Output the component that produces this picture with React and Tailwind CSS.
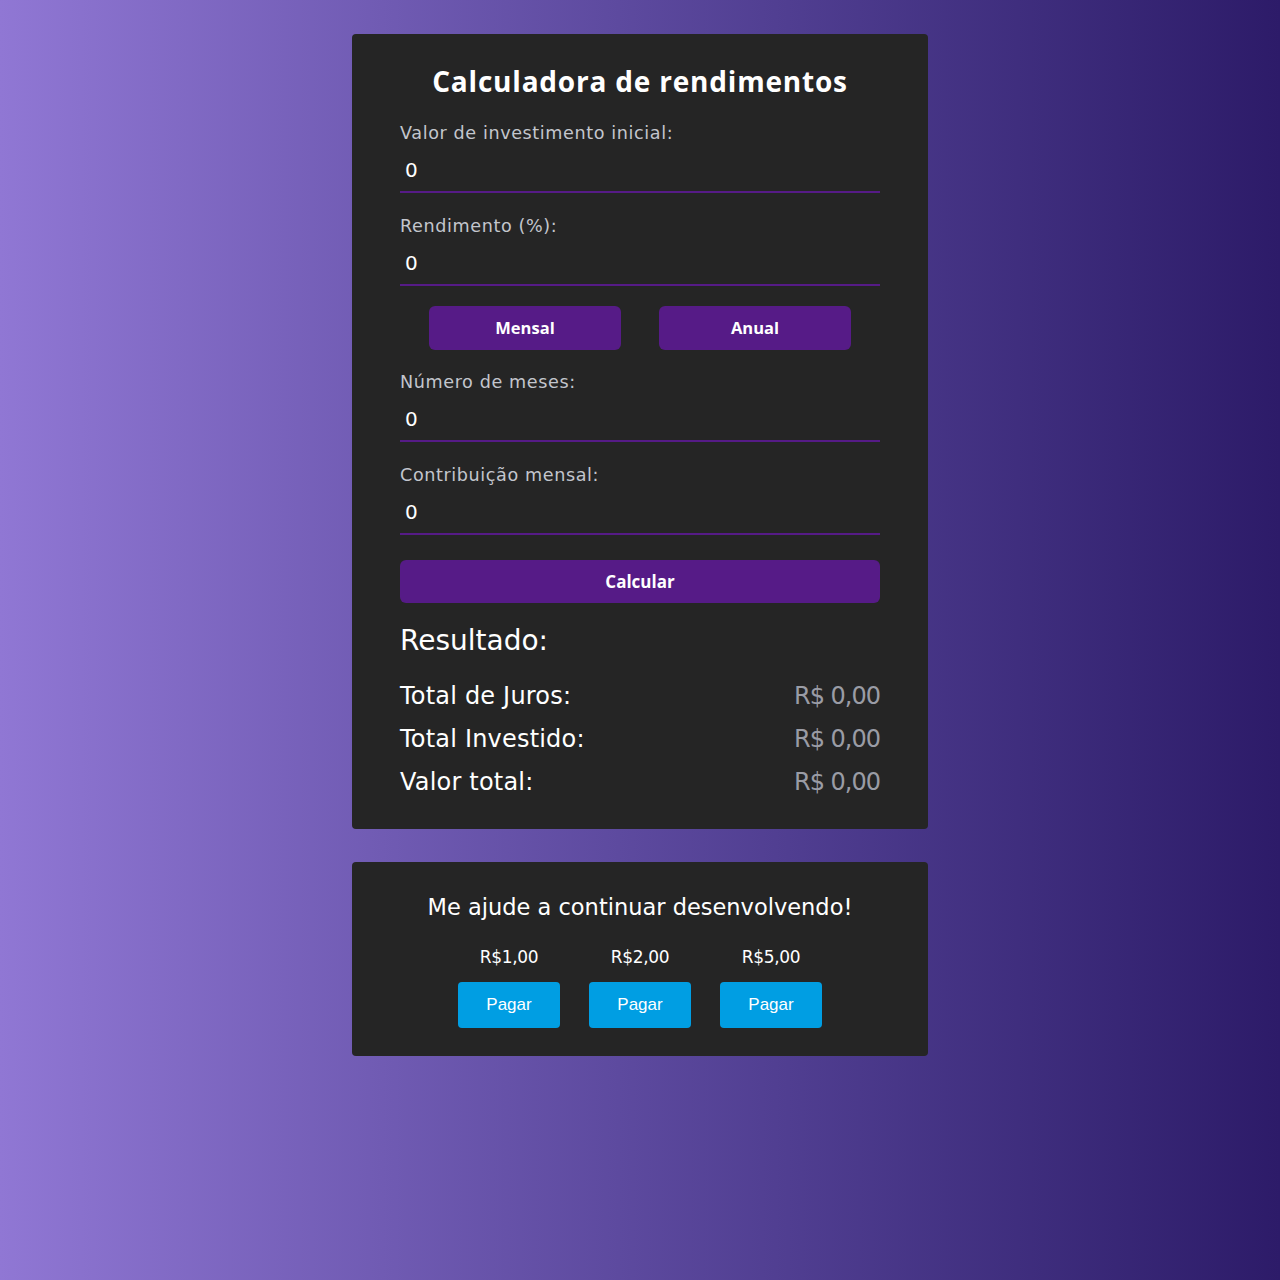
import React, { useState } from 'react';

const CORPO = { fontFamily: '"DejaVu Sans", "Open Sans", sans-serif' };
const NEGRITO = { fontFamily: '"Open Sans", "Liberation Sans", sans-serif' };

// Campo com rótulo e linha roxa embaixo
const Campo = ({ rotulo, valor, onChange, className = '' }) => (
  <div className={`flex flex-col ${className}`}>
    <label className="text-[17.6px] leading-[26px] tracking-[0.6px] text-[#c3c6cd]">{rotulo}</label>
    <input
      type="text"
      value={valor}
      onChange={onChange}
      style={CORPO}
      className="mt-[3px] h-[44px] bg-transparent border-b-2 border-[#561b87] px-[5px] text-[20px] text-white outline-none"
    />
  </div>
);

const Linha = ({ titulo, valor }) => (
  <div className="flex justify-between items-center h-[43px]">
    <span className="text-[24px] tracking-[0.2px] text-white">{titulo}</span>
    <span className="text-[24px] tracking-[-1px] text-[#9a9ca5]">{valor}</span>
  </div>
);

export default function App() {
  const [inicial, setInicial] = useState('0');
  const [taxa, setTaxa] = useState('0');
  const [meses, setMeses] = useState('0');
  const [contrib, setContrib] = useState('0');

  return (
    <div
      className="min-h-[1280px] w-full flex flex-col items-center pt-[34px] gap-[33px] bg-gradient-to-r from-[#9077d4] to-[#2d1b69]"
      style={CORPO}
    >
      {/* CALCULADORA */}
      <div className="w-[576px] bg-[#252525] rounded-[4px] px-[48px] pt-[28px] pb-[26px] flex flex-col">
        <h1 style={NEGRITO} className="text-center text-white font-bold text-[28px] leading-[38px] tracking-[0.8px]">
          Calculadora de rendimentos
        </h1>

        <Campo className="mt-[20px]" rotulo="Valor de investimento inicial:" valor={inicial} onChange={(e) => setInicial(e.target.value)} />
        <Campo className="mt-[20px]" rotulo="Rendimento (%):" valor={taxa} onChange={(e) => setTaxa(e.target.value)} />

        <div className="flex justify-center gap-[38px] mt-[20px] mb-[19px]">
          <button style={NEGRITO} className="w-[192px] h-[44px] rounded-[6px] bg-[#561b87] text-white font-bold text-[16.5px]">Mensal</button>
          <button style={NEGRITO} className="w-[192px] h-[44px] rounded-[6px] bg-[#561b87] text-white font-bold text-[16.5px]">Anual</button>
        </div>

        <Campo rotulo="Número de meses:" valor={meses} onChange={(e) => setMeses(e.target.value)} />
        <Campo className="mt-[20px]" rotulo="Contribuição mensal:" valor={contrib} onChange={(e) => setContrib(e.target.value)} />

        <button style={NEGRITO} className="mt-[25px] h-[43px] w-full rounded-[6px] bg-[#561b87] text-white font-bold text-[17px]">
          Calcular
        </button>

        <h2 className="mt-[19px] text-[28px] leading-[38px] text-white">Resultado:</h2>
        <div className="mt-[14px] flex flex-col">
          <Linha titulo="Total de Juros:" valor="R$ 0,00" />
          <Linha titulo="Total Investido:" valor="R$ 0,00" />
          <Linha titulo="Valor total:" valor="R$ 0,00" />
        </div>
      </div>

      {/* DOAÇÃO */}
      <div className="w-[576px] bg-[#252525] rounded-[4px] pt-[30px] pb-[28px] flex flex-col items-center">
        <p className="text-[22.5px] leading-[30px] text-white">Me ajude a continuar desenvolvendo!</p>
        <div className="mt-[22px] flex gap-[29px]">
          {['R$1,00', 'R$2,00', 'R$5,00'].map((v) => (
            <div key={v} className="flex flex-col items-center">
              <span className="text-[17px] leading-[26px] tracking-[-0.3px] text-white">{v}</span>
              <button
                className="mt-[12px] w-[102px] h-[46px] rounded-[4px] bg-[#009ee3] text-white text-[17px]"
                style={{ fontFamily: '"Liberation Sans", Arial, sans-serif' }}
              >
                Pagar
              </button>
            </div>
          ))}
        </div>
      </div>
    </div>
  );
}
